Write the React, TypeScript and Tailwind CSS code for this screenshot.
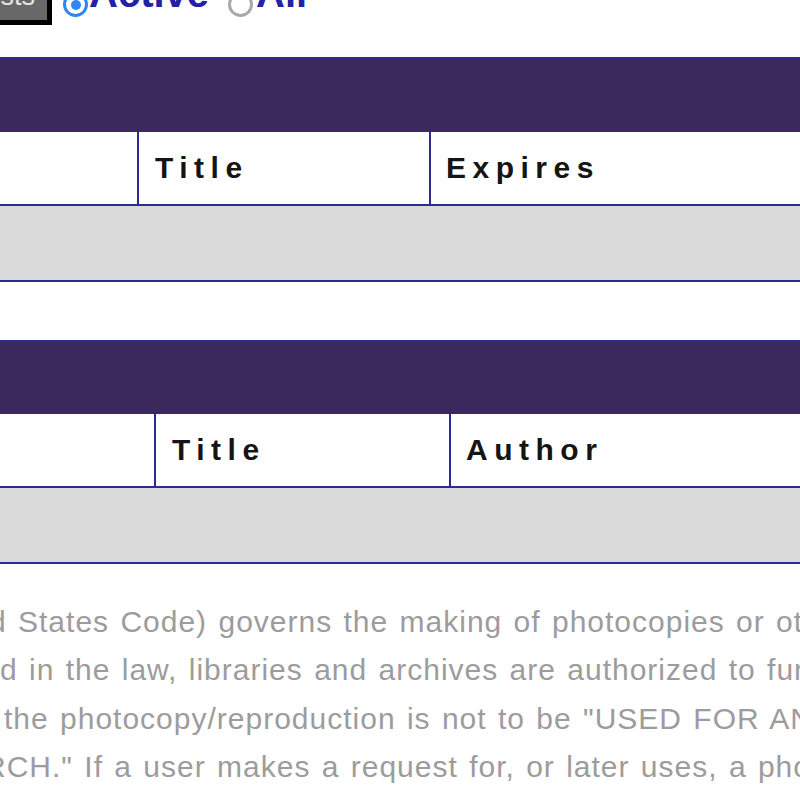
import React from "react";

function Radio({ checked }: { checked: boolean }) {
  return checked ? (
    <div className="w-[25px] h-[25px] shrink-0 rounded-full border-[3px] border-[#2f86f0] bg-white flex items-center justify-center mb-[8px]">
      <div className="w-[10px] h-[10px] rounded-full bg-[#2f86f0]" />
    </div>
  ) : (
    <div className="w-[25px] h-[25px] shrink-0 rounded-full border-[3px] border-[#a8a8a8] bg-white mb-[8px]" />
  );
}

function DataTable({
  first,
  second,
  label,
  mt,
  purpleH,
}: {
  first: string;
  second: string;
  label: string;
  mt: string;
  purpleH: string;
}) {
  return (
    <div className={`${mt} border-t-2 border-[#2c2c8c]`}>
      <div className={`${purpleH} bg-[#3b285c]`} />
      <div className="flex h-[74px] border-b-2 border-[#2c2c8c]">
        <div className={`${first} shrink-0 border-r-2 border-[#2c2c8c]`} />
        <div
          className={`${second} shrink-0 border-r-2 border-[#2c2c8c] flex items-center pl-[16px]`}
        >
          <span className="text-[30px] font-bold tracking-[6.5px] text-[#151515] leading-none">
            Title
          </span>
        </div>
        <div className="flex-1 flex items-center pl-[15px]">
          <span className="text-[30px] font-bold tracking-[6.5px] text-[#151515] leading-none">
            {label}
          </span>
        </div>
      </div>
      <div className="h-[76px] bg-[#dadada] border-b-2 border-[#2c2c8c]" />
    </div>
  );
}

export default function App() {
  return (
    <div className="w-[800px] h-[800px] overflow-hidden bg-white font-['Liberation_Sans',Arial,sans-serif]">
      <div className="flex items-end h-[25px]">
        <div className="-ml-[108px] w-[160px] h-[60px] shrink-0 border-[5px] border-black bg-[#686868] flex items-end justify-end pr-[12px] pb-[10px]">
          <span className="text-[27px] leading-none text-[#e6e6e6]">Requests</span>
        </div>
        <div className="ml-[11px]">
          <Radio checked />
        </div>
        <span className="ml-[1px] mb-[12px] text-[40px] font-bold leading-none text-[#2222a6]">
          Active
        </span>
        <div className="ml-[19px]">
          <Radio checked={false} />
        </div>
        <span className="ml-[3px] mb-[12px] text-[40px] font-bold leading-none text-[#2222a6]">
          All
        </span>
      </div>

      <DataTable
        first="w-[139px]"
        second="w-[292px]"
        label="Expires"
        mt="mt-[32px]"
        purpleH="h-[73px]"
      />
      <DataTable
        first="w-[156px]"
        second="w-[295px]"
        label="Author"
        mt="mt-[58px]"
        purpleH="h-[72px]"
      />

      <div className="mt-[34px] text-[30px] leading-[48.33px] text-[#9c9c9c] tracking-[1px]">
        <div className="whitespace-nowrap -ml-[11px] [word-spacing:2px]">
          d States Code) governs the making of photocopies or other reproductions
        </div>
        <div className="whitespace-nowrap ml-0 [word-spacing:2px]">
          d in the law, libraries and archives are authorized to furnish a photocopy
        </div>
        <div className="whitespace-nowrap ml-[4px] [word-spacing:2px]">
          {" "}the photocopy/reproduction is not to be "USED FOR ANY PURPOSE
        </div>
        <div className="whitespace-nowrap -ml-[16px] [word-spacing:2px]">
          RCH." If a user makes a request for, or later uses, a photocopy
        </div>
      </div>
    </div>
  );
}
